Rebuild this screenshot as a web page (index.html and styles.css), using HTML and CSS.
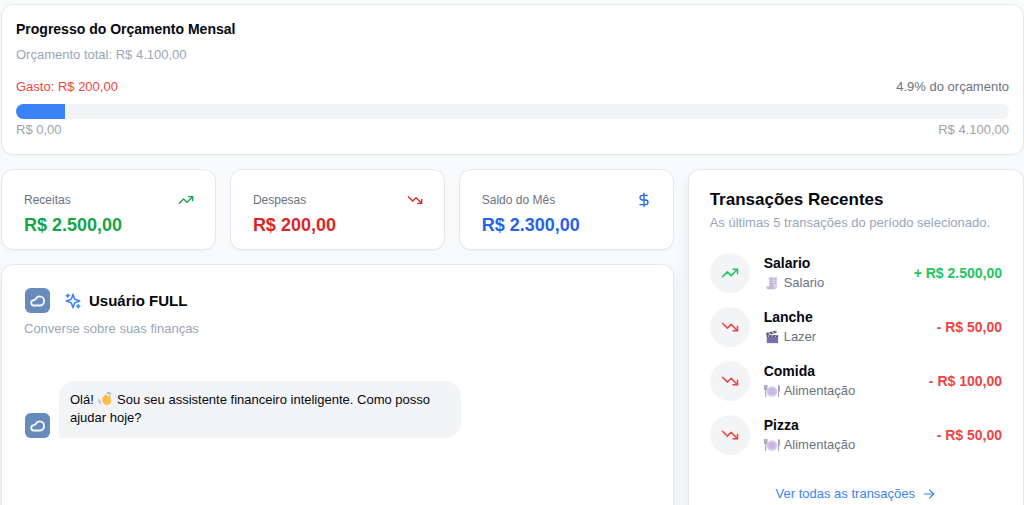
FILE: index.html
```html
<!DOCTYPE html>
<html lang="pt-BR">
<head>
<meta charset="utf-8">
<meta name="viewport" content="width=device-width, initial-scale=1">
<title>Finanças</title>
<link rel="stylesheet" href="styles.css">
</head>
<body>
<svg class="defs" aria-hidden="true">
  <symbol id="up" viewBox="0 0 24 24"><path d="M22 7 13.5 15.500 8.500 10.500 2 17"/><path d="M16 7h6v6"/></symbol>
  <symbol id="down" viewBox="0 0 24 24"><path d="M22 17 13.500 8.500 8.500 13.500 2 7"/><path d="M16 17h6v-6"/></symbol>
  <symbol id="dollar" viewBox="0 0 24 24"><path d="M12 2v20"/><path d="M17 5H9.500a3.500 3.500 0 0 0 0 7h5a3.500 3.500 0 0 1 0 7H6"/></symbol>
  <symbol id="arrow" viewBox="0 0 24 24"><path d="M4 12h16"/><path d="m13 5 7 7-7 7"/></symbol>
  <symbol id="sparkles" viewBox="0 0 24 24"><path d="m12 3-1.900 5.800a2 2 0 0 1-1.300 1.300L3 12l5.800 1.900a2 2 0 0 1 1.300 1.300L12 21l1.900-5.800a2 2 0 0 1 1.300-1.300L21 12l-5.800-1.900a2 2 0 0 1-1.300-1.300Z"/><path d="M5 3v4M19 17v4M3 5h4M17 19h4"/></symbol>
  <symbol id="bot" viewBox="0 0 24 24"><rect width="24" height="24" rx="5.500" fill="#688bbd"/><path d="M8 16.800h6.500c2.300 0 3.800-1.900 3.800-4.300 0-2.500-1.800-4.500-4.200-4.500-2 0-3 1.100-3.700 2.500-.4.800-1.200.9-2.200 1.200A2.600 2.600 0 0 0 8 16.800Z" fill="none" stroke="#f7f9fc" stroke-width="1.800" stroke-linejoin="round"/></symbol>
  <symbol id="receipt" viewBox="0 0 16 16"><path d="M4 1h10v11.500a2 2 0 0 1-2 2H5Z" fill="#ddd3e9"/><path d="M1.500 12h9v1a2 2 0 0 0 2 2H4a2.500 2.500 0 0 1-2.500-2.500Z" fill="#c3b3dc"/><path d="M5.500 3.500h4M11 3.500h1.500M5.500 6h4M11 6h1.500M5.500 8.500h4M11 8.500h1.500M5.500 10.500h4" stroke="#aaa0bd" stroke-width="1.200"/></symbol>
  <symbol id="clapper" viewBox="0 0 16 16"><path d="M2 6h13v9H2Z" fill="#7470b0"/><path d="m1 3.500 12-3 .8 2.500-12 3Z" fill="#5b5776"/><path d="m4 2.700 2 2.200M8 1.700l2 2.200M12 .8l1.500 2" stroke="#d9d5e5" stroke-width="1.300"/><path d="M2 6h13v2H2Z" fill="#575373"/><path d="m5 6-1.500 2M9 6 7.500 8M13 6l-1.500 2" stroke="#d0cce2"/></symbol>
  <symbol id="plate" viewBox="1 1 16 14"><circle cx="9" cy="8.500" r="5.300" fill="#d8caec"/><circle cx="9" cy="8.500" r="3.500" fill="#c8b7e6"/><path d="M1.500 2v3q0 2 1.200 2T4 5V2M2.700 2v12" fill="none" stroke="#aaa2b6" stroke-width="1.100"/><path d="M15.500 14V2q2 1 1.500 6h-1.500Z" fill="#b4abc3" stroke="#aaa2b6"/></symbol>
  <symbol id="wave" viewBox="0 0 16 16"><path d="M5 6.500 8 3.200q1-1 1.700 0L12 5.500l.1-2q.9-1.500 1.700.1l1.300 6.200q.5 4.600-4.300 5.200-3 .2-4.600-2.200L4.700 10q-.4-1.100.8-1.100L4.600 8q-.4-1 .4-1.500Z" fill="#ffc24a"/><path d="m6 7 2.500 3M8 5l2.500 3M5.500 9 8 12" stroke="#f1a02f" stroke-width=".8"/><path d="M10 1.500q2.500-.7 4 1.500M11 .5q3-.1 4 2M1 8q-.2 2.700 2.400 4M.5 10.500q.5 2 2.500 2.800" fill="none" stroke="#79b3dd" stroke-width="1.100"/></symbol>
</svg>
<main class="page">
  <section class="card budget">
    <h2 class="budget-title">Progresso do Orçamento Mensal</h2>
    <p class="muted">Orçamento total: R$ 4.100,00</p>
    <div class="between spent"><span class="red">Gasto: R$ 200,00</span><span class="gray">4.9% do orçamento</span></div>
    <div class="track" role="progressbar" aria-label="Orçamento gasto" aria-valuenow="4.9" aria-valuemin="0" aria-valuemax="100"><div class="fill" style="width:4.9%"></div></div>
    <div class="between limits"><span>R$ 0,00</span><span>R$ 4.100,00</span></div>
  </section>
  <div class="columns">
    <div class="left">
      <div class="stats">
        <section class="card stat income"><div class="between"><h3>Receitas</h3><svg class="icon small"><use href="#up"/></svg></div><p class="value">R$ 2.500,00</p></section>
        <section class="card stat expense"><div class="between"><h3>Despesas</h3><svg class="icon small"><use href="#down"/></svg></div><p class="value">R$ 200,00</p></section>
        <section class="card stat balance"><div class="between"><h3>Saldo do Mês</h3><svg class="icon small"><use href="#dollar"/></svg></div><p class="value">R$ 2.300,00</p></section>
      </div>
      <section class="card chat">
        <header class="chat-head"><svg class="avatar"><use href="#bot"/></svg><svg class="icon sparkle"><use href="#sparkles"/></svg><h2>Usuário FULL</h2></header>
        <p class="muted">Converse sobre suas finanças</p>
        <div class="message"><svg class="avatar"><use href="#bot"/></svg><p class="bubble">Olá! <svg class="wave" aria-hidden="true"><use href="#wave"/></svg> Sou seu assistente financeiro inteligente. Como posso ajudar hoje?</p></div>
      </section>
    </div>
    <section class="card recent">
      <h2>Transações Recentes</h2>
      <p class="muted">As últimas 5 transações do período selecionado.</p>
      <ul class="list">
        <li><span class="disc plus"><svg class="icon"><use href="#up"/></svg></span><div class="info"><h3>Salario</h3><p><svg class="emoji"><use href="#receipt"/></svg>Salario</p></div><strong class="plus">+ R$ 2.500,00</strong></li>
        <li><span class="disc minus"><svg class="icon"><use href="#down"/></svg></span><div class="info"><h3>Lanche</h3><p><svg class="emoji"><use href="#clapper"/></svg>Lazer</p></div><strong class="minus">- R$ 50,00</strong></li>
        <li><span class="disc minus"><svg class="icon"><use href="#down"/></svg></span><div class="info"><h3>Comida</h3><p><svg class="emoji"><use href="#plate"/></svg>Alimentação</p></div><strong class="minus">- R$ 100,00</strong></li>
        <li><span class="disc minus"><svg class="icon"><use href="#down"/></svg></span><div class="info"><h3>Pizza</h3><p><svg class="emoji"><use href="#plate"/></svg>Alimentação</p></div><strong class="minus">- R$ 50,00</strong></li>
      </ul>
      <a class="all" href="#">Ver todas as transações<svg class="icon small"><use href="#arrow"/></svg></a>
    </section>
  </div>
</main>
</body>
</html>
```
FILE: styles.css
```css
* { box-sizing: border-box; margin: 0; padding: 0; }
body {
  height: 100vh;
  overflow: hidden;
  background: #f9fafc;
  color: #05070f;
  font: 13px/18px "Liberation Sans", Arial, sans-serif;
}
.defs { position: absolute; width: 0; height: 0; }
.page { display: flex; flex-direction: column; gap: 14px; height: 100vh; padding: 4px 0 0 1px; }
.card { background: #fff; border: 1px solid #e4e8ef; border-radius: 12px; box-shadow: 0 1px 2px rgba(15, 23, 42, .04); }
.between { display: flex; justify-content: space-between; align-items: center; }
.muted { color: #98a5ba; }
.icon { width: 18px; height: 18px; fill: none; stroke: currentColor; stroke-width: 2; stroke-linecap: round; stroke-linejoin: round; }
.icon.small { width: 16px; height: 16px; }

.budget { flex: none; padding: 15px 14px; }
.budget-title { font-size: 14px; line-height: 18px; margin-bottom: 8px; }
.spent { margin: 14px 0 8px; }
.red { color: #ef4444; }
.gray { color: #6b7280; }
.track { height: 15px; overflow: hidden; border-radius: 8px; background: #f2f4f8; }
.fill { height: 100%; background: #3b82f6; }
.limits { margin-top: 2px; color: #9ca3af; }

.columns { flex: 1; min-height: 0; display: grid; grid-template-columns: 2fr 1fr; gap: 14px; }
.left { display: flex; flex-direction: column; gap: 14px; min-width: 0; }
.stats { display: grid; grid-template-columns: repeat(3, 1fr); gap: 14px; }
.stat { padding: 21px 21px 12px 22px; }
.stat h3 { font-size: 12px; font-weight: 400; color: #6b7280; }
.value { margin-top: 4px; font-size: 18px; line-height: 24px; font-weight: 700; }
.income .value, .income .icon { color: #16a34a; }
.expense .value, .expense .icon { color: #dc2626; }
.balance .value, .balance .icon { color: #2563eb; }

.chat, .recent { border-bottom: 0; border-bottom-left-radius: 0; border-bottom-right-radius: 0; box-shadow: 0 8px 14px rgba(15, 23, 42, .08); }
.chat { flex: 1; padding: 23px 22px; }
.chat-head { display: flex; align-items: center; padding-left: 1px; margin-bottom: 7px; }
.chat-head h2 { font-size: 15px; line-height: 24px; }
.avatar { flex: none; width: 25px; height: 25px; }
.sparkle { width: 18px; height: 18px; margin: 0 7px 0 14px; color: #3b82f6; }
.message { display: flex; align-items: flex-end; gap: 9px; margin-top: 43px; padding-left: 1px; }
.bubble { max-width: 402px; padding: 10px 10px 11px 11px; border-radius: 16px 16px 16px 0; background: #f2f4f8; }
.wave { width: 14px; height: 14px; margin: 0 1px; vertical-align: -2px; }

.recent { padding: 18px 21px; }
.recent h2 { font-size: 17px; line-height: 24px; }
.recent .muted { margin-top: 2px; }
.list { list-style: none; display: flex; flex-direction: column; gap: 14px; margin-top: 21px; }
.list li { display: flex; align-items: center; gap: 14px; }
.disc { display: grid; place-items: center; width: 40px; height: 40px; border-radius: 50%; background: #f3f4f6; }
.info { flex: 1; }
.info h3 { font-size: 14px; line-height: 20px; }
.info p { display: flex; align-items: center; gap: 4px; line-height: 20px; color: #6b7280; }
.emoji { width: 16px; height: 14px; }
.list strong { font-size: 14px; }
.plus { color: #22c55e; }
.minus { color: #ef4444; }
.all { display: flex; justify-content: center; align-items: center; gap: 7px; margin-top: 30px; color: #3b82f6; text-decoration: none; }
.all .icon { width: 14px; height: 14px; }
```
